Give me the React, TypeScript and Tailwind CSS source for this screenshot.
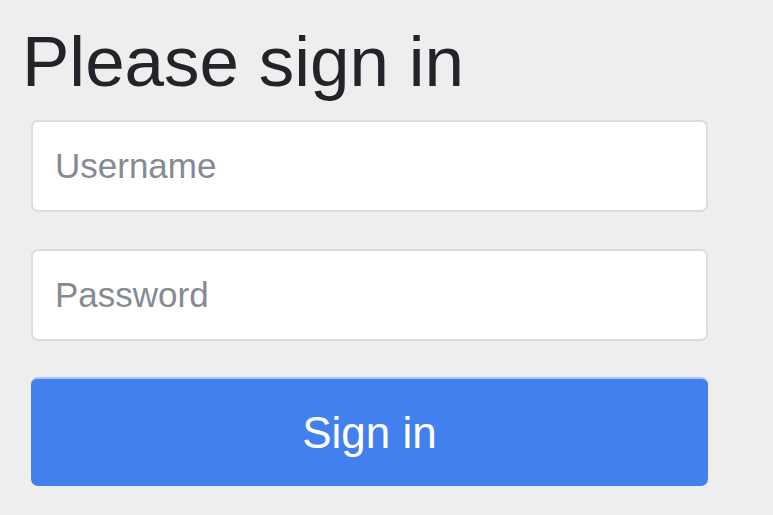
const App = () => {
  return (
    <div
      className="min-h-screen w-full bg-[#eeeeee] pl-[31px] pr-[65px] pt-[19px]"
      style={{ fontFamily: '"Liberation Sans", Arial, sans-serif' }}
    >
      {/* Heading */}
      <h2 className="-ml-[9px] text-[71px] leading-[85px] text-[#212529] font-normal">
        Please sign in
      </h2>

      {/* Form */}
      <form className="mt-[16px] flex flex-col w-[677px]">
        <input
          type="text"
          placeholder="Username"
          className="h-[92px] w-full rounded-[7px] border-2 border-[#dcdcdc] bg-white px-[22px] text-[35px] text-[#495057] placeholder:text-[#858b93] outline-none"
        />
        <input
          type="password"
          placeholder="Password"
          className="mt-[37px] h-[92px] w-full rounded-[7px] border-2 border-[#dcdcdc] bg-white px-[22px] text-[35px] text-[#495057] placeholder:text-[#858b93] outline-none"
        />
        <button
          type="button"
          className="mt-[36px] h-[109px] w-full rounded-[7px] border-t-2 border-[#a9c4f2] bg-[#4280ed] text-[44px] text-white"
        >
          Sign in
        </button>
      </form>
    </div>
  )
}

export default App
